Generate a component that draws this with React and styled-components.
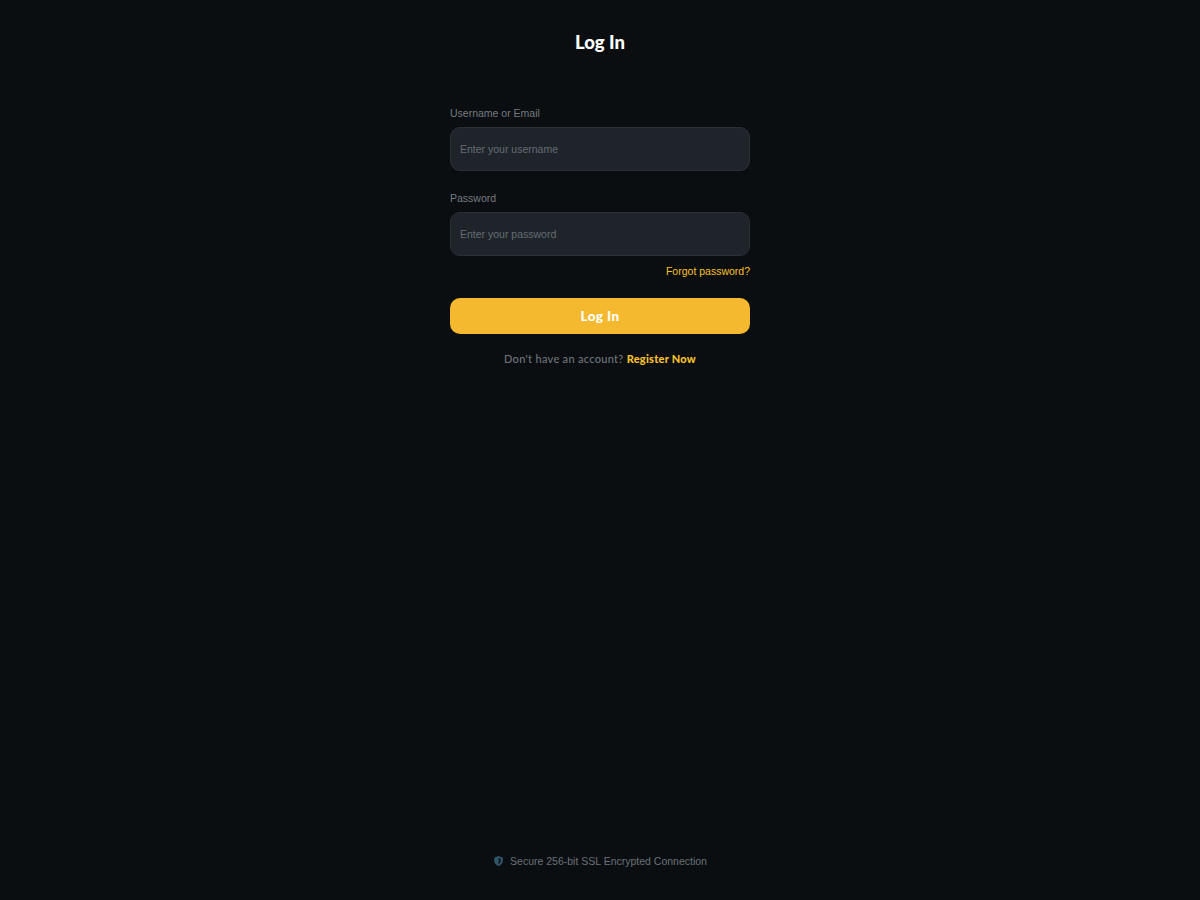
import React from "react";
import styled, { createGlobalStyle } from "styled-components";

const Global = createGlobalStyle`
  html, body { margin: 0; padding: 0; background: #0a0e11; }
  * { box-sizing: border-box; }
`;

const Page = styled.div`
  width: 100%;
  height: 900px;
  background: #0a0e11;
  display: flex;
  flex-direction: column;
  align-items: center;
`;

const Title = styled.h1`
  margin: 0;
  padding-top: 31px;
  height: 100px;
  font: 900 18.5px/22px Lato, sans-serif;
  color: #ffffff;
`;

const Form = styled.form`
  width: 300px;
  display: flex;
  flex-direction: column;
  flex: 1;
`;

const Field = styled.div`
  display: flex;
  flex-direction: column;
  margin-bottom: 14px;
  &:nth-of-type(2) { margin-bottom: 7px; }
`;

const Label = styled.label`
  font: 400 10.5px/16px "Liberation Sans", sans-serif;
  color: #767b80;
  height: 16px;
  margin: 5px 0 6px;
`;

const Input = styled.input`
  height: 44px;
  width: 100%;
  padding: 0 9px;
  background: #1f242b;
  border: 1px solid #2a3037;
  border-radius: 10px;
  outline: none;
  font: 400 10.5px "Liberation Sans", sans-serif;
  &::placeholder { color: #646c73; opacity: 1; }
`;

const Forgot = styled.a`
  align-self: flex-end;
  font: 400 10.5px/16px "Liberation Sans", sans-serif;
  color: #f8c02a;
  height: 16px;
`;

const Submit = styled.button`
  margin-top: 19px;
  padding: 0 0 1px;
  height: 36px;
  width: 100%;
  border: none;
  border-radius: 10px;
  background: #f4b92f;
  color: #ffffff;
  font: 900 13.5px Lato, sans-serif;
  letter-spacing: 0.4px;
`;

const Prompt = styled.p`
  margin: 18px 0 0;
  text-align: center;
  font: 500 11px/14px Lato, sans-serif;
  color: #6f757a;
  letter-spacing: 0.3px;
`;

const Register = styled.a`
  color: #f8c02a;
  font-weight: 900;
  letter-spacing: 0.25px;
`;

const Footer = styled.div`
  display: flex;
  align-items: center;
  gap: 6px;
  height: 14px;
  margin-bottom: 32px;
  font: 400 10.5px/14px "Liberation Sans", sans-serif;
  color: #6a7177;
`;

const Shield = () => (
  <svg width="11" height="12" viewBox="0 0 24 24" aria-hidden="true">
    <path d="M12 1 2.5 5v6c0 5.8 4 11 9.5 12 5.5-1 9.500-6.200 9.500-12V5z" fill="#2f5568" />
    <path d="M12 5.500v13.500c2.900-1.100 5-4.300 5-8V7.500z" fill="#0f1a20" />
  </svg>
);

export default function App() {
  return (
    <>
      <Global />
      <Page>
        <Title>Log In</Title>
        <Form onSubmit={(e) => e.preventDefault()}>
          <Field>
            <Label>Username or Email</Label>
            <Input placeholder="Enter your username" />
          </Field>
          <Field>
            <Label>Password</Label>
            <Input type="password" placeholder="Enter your password" />
          </Field>
          <Forgot>Forgot password?</Forgot>
          <Submit type="submit">Log In</Submit>
          <Prompt>
            Don't have an account? <Register>Register Now</Register>
          </Prompt>
        </Form>
        <Footer>
          <Shield />
          Secure 256-bit SSL Encrypted Connection
        </Footer>
      </Page>
    </>
  );
}
